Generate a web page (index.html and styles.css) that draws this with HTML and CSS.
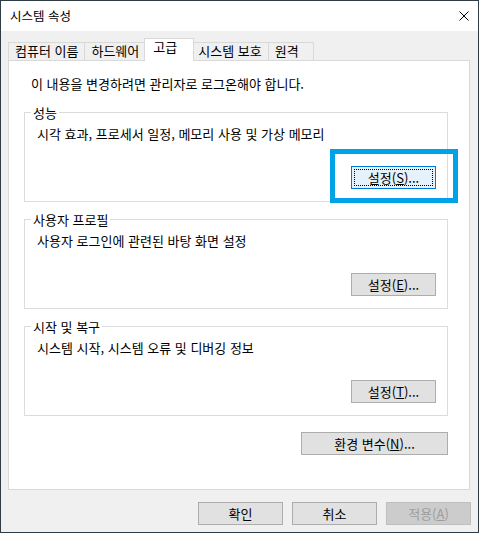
FILE: index.html
```html
<!DOCTYPE html>
<html lang="ko">
<head>
<meta charset="utf-8">
<title>시스템 속성</title>
<link rel="stylesheet" href="styles.css">
</head>
<body>
<div class="window">
  <div class="titlebar">
    <span class="title">시스템 속성</span>
    <span class="close"><svg width="10" height="10" viewBox="0 0 10 10"><path d="M0.5 0.5L9.5 9.5M9.5 0.5L0.5 9.5" stroke="#000" stroke-width="1" fill="none"/></svg></span>
  </div>
  <div class="tabs">
    <div class="tab">컴퓨터 이름</div>
    <div class="tab">하드웨어</div>
    <div class="tab tab-active">고급</div>
    <div class="tab">시스템 보호</div>
    <div class="tab">원격</div>
  </div>
  <div class="panel">
    <p class="notice">이 내용을 변경하려면 관리자로 로그온해야 합니다.</p>
    <div class="group">
      <div class="group-title">성능</div>
      <div class="group-desc">시각 효과, 프로세서 일정, 메모리 사용 및 가상 메모리</div>
      <button class="btn btn-focus">설정(<u>S</u>)...</button>
      <div class="highlight"></div>
    </div>
    <div class="group">
      <div class="group-title">사용자 프로필</div>
      <div class="group-desc">사용자 로그인에 관련된 바탕 화면 설정</div>
      <button class="btn">설정(<u>E</u>)...</button>
    </div>
    <div class="group">
      <div class="group-title">시작 및 복구</div>
      <div class="group-desc">시스템 시작, 시스템 오류 및 디버깅 정보</div>
      <button class="btn">설정(<u>T</u>)...</button>
    </div>
    <button class="btn btn-wide">환경 변수(<u>N</u>)...</button>
  </div>
  <div class="actions">
    <button class="btn">확인</button>
    <button class="btn">취소</button>
    <button class="btn" disabled>적용(<u>A</u>)</button>
  </div>
</div>
</body>
</html>
```

FILE: styles.css
```css
body {
  margin: 0;
  font-family: "Noto Sans CJK KR", "Noto Sans", sans-serif;
  font-size: 13px;
  color: #000;
}

.window {
  width: 479px;
  height: 533px;
  box-sizing: border-box;
  border: 1px solid #2e3d48;
  background: #f0f0f0;
  display: flex;
  flex-direction: column;
}

.titlebar {
  height: 30px;
  flex: none;
  background: #fff;
  display: flex;
  align-items: center;
  justify-content: space-between;
  padding: 0 9px;
}

.title {
  font-size: 12.5px;
  line-height: 16px;
}

.close {
  display: flex;
}

.tabs {
  display: flex;
  align-items: flex-end;
  margin-top: 7px;
  padding-left: 7px;
}

.tab {
  height: 18px;
  min-width: 46px;
  box-sizing: border-box;
  border: 1px solid #d9d9d9;
  border-bottom: none;
  padding: 0 6px;
  line-height: 15px;
  margin-left: -1px;
  background: #f0f0f0;
  white-space: nowrap;
}

.tab:first-child {
  margin-left: 0;
}

.tab-active {
  height: 23px;
  min-width: 50px;
  margin: 0 -2px -1px;
  padding: 0 8px;
  background: #fff;
  position: relative;
  z-index: 1;
}

.panel {
  margin: 0 8px 0 7px;
  height: 430px;
  box-sizing: border-box;
  border: 1px solid #d9d9d9;
  background: #fff;
  padding: 15px 21px 0 15px;
  display: flex;
  flex-direction: column;
}

.notice {
  margin: 0 0 0 7px;
  line-height: 16px;
}

.group {
  margin-top: 20px;
  height: 90px;
  box-sizing: border-box;
  border: 1px solid #dcdcdc;
  padding: 0 11px 12px 12px;
  display: flex;
  flex-direction: column;
  position: relative;
}

.group + .group {
  margin-top: 17px;
}

.group-title {
  align-self: flex-start;
  margin: -8px 0 0 -6px;
  padding: 0 2px;
  background: #fff;
  line-height: 16px;
}

.group-desc {
  margin-top: 5px;
  line-height: 16px;
}

.group .btn {
  margin-top: auto;
  align-self: flex-end;
}

.btn {
  width: 85px;
  height: 23px;
  box-sizing: border-box;
  border: 1px solid #adadad;
  background: #e1e1e1;
  font-family: inherit;
  font-size: 13px;
  color: #000;
  padding: 0;
  line-height: 21px;
}

.btn-focus {
  background: #e5f1fb;
  border-color: #0078d7;
  outline: 1px dotted #000;
  outline-offset: -4px;
}

.btn-wide {
  width: 147px;
  align-self: flex-end;
  margin-top: 16px;
}

.btn:disabled {
  background: #cccccc;
  border-color: #bfbfbf;
  color: #9d9d9d;
}

.highlight {
  position: absolute;
  left: 305px;
  top: 36px;
  width: 128px;
  height: 54px;
  box-sizing: border-box;
  border: 5px solid #00a2e8;
}

.actions {
  display: flex;
  justify-content: flex-end;
  gap: 9px;
  margin-top: 12px;
  padding-right: 7px;
}
```
